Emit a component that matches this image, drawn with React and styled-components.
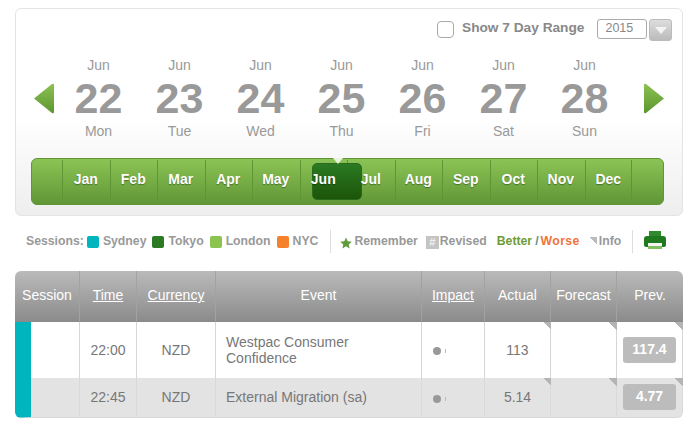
import React from "react";
import styled, { createGlobalStyle } from "styled-components";

const days = [
  ["22", "Mon"],
  ["23", "Tue"],
  ["24", "Wed"],
  ["25", "Thu"],
  ["26", "Fri"],
  ["27", "Sat"],
  ["28", "Sun"],
];
const months = ["Jan", "Feb", "Mar", "Apr", "May", "Jun", "Jul", "Aug", "Sep", "Oct", "Nov", "Dec"];
const rows = [
  { time: "22:00", cur: "NZD", event: "Westpac Consumer Confidence", actual: "113", prev: "117.4" },
  { time: "22:45", cur: "NZD", event: "External Migration (sa)", actual: "5.14", prev: "4.77", alt: true },
];

const Arrow = ({ right }) => (
  <ArrowSvg viewBox="0 0 21 31" $right={right}>
    <defs>
      <linearGradient id={right ? "ar" : "al"} x1="0" y1="0" x2="0" y2="1">
        <stop offset="0" stopColor="#8cc152" />
        <stop offset="1" stopColor="#5c962f" />
      </linearGradient>
    </defs>
    <path
      d={right ? "M1 2 Q1 0 3 1 L21 15.5 L3 30 Q1 31 1 29Z" : "M20 2 Q20 0 18 1 L0 15.5 L18 30 Q20 31 20 29Z"}
      fill={`url(#${right ? "ar" : "al"})`}
    />
  </ArrowSvg>
);

const Printer = () => (
  <svg width="22" height="20" viewBox="0 0 22 20">
    <path d="M5 1h12v5H5z" fill="#2f8a2f" />
    <path d="M3 6h16a3 3 0 0 1 3 3v6a2 2 0 0 1-2 2h-2v-4H4v4H2a2 2 0 0 1-2-2V9a3 3 0 0 1 3-3z" fill="#1f7a1f" />
    <path d="M4 13h14v6H4z" fill="#f4f4f4" />
    <path d="M4 16h14v3H4z" fill="#7fbf5f" />
  </svg>
);

const Star = () => (
  <svg width="12" height="12" viewBox="0 0 24 24">
    <path d="M12 1l3.400 7.400 8.100.9-6 5.500 1.700 8L12 18.700 4.800 22.800l1.700-8-6-5.500 8.100-.9z" fill="#5f9a3c" />
  </svg>
);

export default function App() {
  return (
    <Page>
      <GlobalStyle />
      <Panel>
        <TopRow>
          <Check />
          <RangeLabel>Show 7 Day Range</RangeLabel>
          <YearBox>2015</YearBox>
          <YearButton>
            <YearCaret />
          </YearButton>
        </TopRow>
        <DayRow>
          <Arrow />
          <Days>
            {days.map(([n, d]) => (
              <Day key={n}>
                <DayMonth>Jun</DayMonth>
                <DayNum>{n}</DayNum>
                <DayName>{d}</DayName>
              </Day>
            ))}
          </Days>
          <Arrow right />
        </DayRow>
        <MonthBar>
          {months.map((m) => (
            <Month key={m}>
              {m === "Jun" && (
                <Selected>
                  <Notch />
                </Selected>
              )}
              <MonthText>{m}</MonthText>
            </Month>
          ))}
        </MonthBar>
      </Panel>

      <Legend>
        <LegendText>Sessions:</LegendText>
        <Swatch $c="#00b5bd" $ml={3} />
        <LegendText $ml={4}>Sydney</LegendText>
        <Swatch $c="#2b7a24" $ml={6} />
        <LegendText $ml={4}>Tokyo</LegendText>
        <Swatch $c="#8bc34f" $ml={6} />
        <LegendText $ml={4}>London</LegendText>
        <Swatch $c="#f5822a" $ml={6} />
        <LegendText $ml={4}>NYC</LegendText>
        <LegendDivider $ml={12} />
        <StarWrap>
          <Star />
        </StarWrap>
        <LegendText $ml={2}>Remember</LegendText>
        <HashBox>#</HashBox>
        <LegendText $ml={1}>Revised</LegendText>
        <LegendText $ml={10} $c="#6f9c35">Better</LegendText>
        <LegendText $ml={3} $c="#5f8f8f">/</LegendText>
        <WorseText $ml={2} $c="#f0743a">Worse</WorseText>
        <InfoCorner />
        <LegendText $ml={2}>Info</LegendText>
        <LegendDivider $ml={11} />
        <PrinterWrap>
          <Printer />
        </PrinterWrap>
      </Legend>

      <Table>
        <Head>Session</Head>
        <Head $link>Time</Head>
        <Head $link>Currency</Head>
        <Head>Event</Head>
        <Head $link>Impact</Head>
        <Head>Actual</Head>
        <Head>Forecast</Head>
        <Head $last>Prev.</Head>

        {rows.map((r) => (
          <React.Fragment key={r.time}>
            <Cell $alt={r.alt} $first $bottom={r.alt} />
            <Cell $alt={r.alt}>{r.time}</Cell>
            <Cell $alt={r.alt}>{r.cur}</Cell>
            <EventCell $alt={r.alt}>{r.event}</EventCell>
            <ImpactCell $alt={r.alt}>
              <ImpactDot />
              <ImpactTick />
            </ImpactCell>
            <Cell $alt={r.alt} $corner>{r.actual}</Cell>
            <Cell $alt={r.alt} $corner />
            <Cell $alt={r.alt} $corner $end={r.alt}>
              <Pill>{r.prev}</Pill>
            </Cell>
          </React.Fragment>
        ))}
      </Table>
    </Page>
  );
}

const GlobalStyle = createGlobalStyle`
  html, body {
    margin: 0;
    background: #fff;
  }
  body {
    font-family: "Liberation Sans", Arial, sans-serif;
  }
  * {
    box-sizing: border-box;
  }
`;

const Page = styled.div`
  width: 696px;
  height: 432px;
  padding: 8px 13px 0 15px;
  overflow: hidden;
`;

const Panel = styled.section`
  height: 208px;
  border: 1px solid #e4e4e4;
  border-radius: 6px;
  background: linear-gradient(to bottom, #fff 0, #fff 52%, #eee 100%);
  padding: 10px 0 0 15px;
`;

const TopRow = styled.div`
  display: flex;
  align-items: flex-start;
  height: 30px;
  padding-left: 406px;
`;

const Check = styled.span`
  width: 17px;
  height: 17px;
  margin-top: 2px;
  border: 1px solid #aaa;
  border-radius: 4px;
  background: #fff;
`;

const RangeLabel = styled.span`
  margin-left: 8px;
  font-size: 13.7px;
  font-weight: bold;
  line-height: 18px;
  color: #888;
`;

const YearBox = styled.span`
  width: 50px;
  height: 20px;
  margin-left: 13px;
  border: 1px solid #aaa;
  border-radius: 3px;
  background: #fff;
  font-size: 12.5px;
  line-height: 17px;
  padding-left: 7px;
  color: #888;
`;

const YearButton = styled.span`
  display: flex;
  align-items: center;
  justify-content: center;
  width: 23px;
  height: 22px;
  margin-left: 2px;
  border: 1px solid #bbb;
  border-radius: 3px;
  background: linear-gradient(to bottom, #ddd, #bbb);
`;

const YearCaret = styled.span`
  width: 0;
  height: 0;
  border-left: 6px solid transparent;
  border-right: 6px solid transparent;
  border-top: 7px solid #f4f4f4;
`;

const DayRow = styled.div`
  display: flex;
  align-items: center;
  height: 98px;
  padding-left: 3px;
`;

const ArrowSvg = styled.svg`
  flex: none;
  width: 21px;
  height: 31px;
  margin-left: ${(p) => (p.$right ? "18px" : "0")};
`;

const Days = styled.div`
  display: flex;
  margin-left: 3px;
`;

const Day = styled.div`
  width: 81px;
  text-align: center;
  color: #999;
`;

const DayMonth = styled.div`
  font-size: 14px;
  line-height: 16px;
`;

const DayNum = styled.div`
  font-size: 43px;
  font-weight: bold;
  line-height: 50px;
`;

const DayName = styled.div`
  font-size: 14px;
  line-height: 16px;
`;

const MonthBar = styled.div`
  display: flex;
  width: 633px;
  height: 47px;
  margin-top: 11px;
  padding: 0 30px;
  border: 1px solid #5f9535;
  border-radius: 6px;
  background-image: linear-gradient(180deg, #8cc556 0%, #5f9535 100%);
  background-origin: border-box;
  background-clip: border-box;
  background-repeat: no-repeat;
`;

const Month = styled.div`
  position: relative;
  display: flex;
  align-items: center;
  justify-content: center;
  width: 47.5px;
  padding-bottom: 5px;

  &::before {
    content: "";
    position: absolute;
    left: 0;
    top: 1px;
    bottom: 1px;
    width: 1px;
    background: #5f9535;
  }

  &:last-child::after {
    content: "";
    position: absolute;
    right: 0;
    top: 1px;
    bottom: 1px;
    width: 1px;
    background: #5f9535;
  }
`;

const MonthText = styled.span`
  position: relative;
  z-index: 2;
  font-size: 14px;
  font-weight: bold;
  color: #fff;
  text-shadow: 0 1px 1px rgba(0, 0, 0, 0.35);
`;

const Selected = styled.div`
  position: absolute;
  left: 12px;
  top: 4px;
  width: 50px;
  height: 37px;
  border: 1px solid #2a6a1c;
  border-radius: 5px;
  background: linear-gradient(to bottom, #2b7a24, #1c5508);
  z-index: 1;
`;

const Notch = styled.span`
  position: absolute;
  left: 20px;
  top: -6px;
  width: 0;
  height: 0;
  border-left: 5px solid transparent;
  border-right: 5px solid transparent;
  border-top: 6px solid #eaf3df;
`;

const Legend = styled.div`
  display: flex;
  align-items: center;
  height: 26px;
  margin-top: 12px;
  padding-left: 11px;
`;

const LegendText = styled.span`
  margin-left: ${(p) => p.$ml || 0}px;
  font-size: 12.25px;
  font-weight: bold;
  color: ${(p) => p.$c || "#999"};
`;

const WorseText = styled(LegendText)`
  letter-spacing: 0.4px;
`;

const Swatch = styled.span`
  width: 12px;
  height: 12px;
  margin-left: ${(p) => p.$ml}px;
  margin-top: 1px;
  border-radius: 2px;
  background: ${(p) => p.$c};
`;

const LegendDivider = styled.span`
  width: 1px;
  height: 23px;
  margin-left: ${(p) => p.$ml}px;
  background: #ddd;
`;

const StarWrap = styled.span`
  display: flex;
  margin-left: 9px;
  margin-top: 3px;
`;

const HashBox = styled.span`
  width: 13px;
  height: 13px;
  margin-left: 8px;
  margin-top: 2px;
  background: #c4c4c4;
  color: #eee;
  font-size: 11px;
  font-weight: bold;
  line-height: 13px;
  text-align: center;
`;

const InfoCorner = styled.span`
  width: 8px;
  height: 8px;
  margin-left: 9px;
  background: linear-gradient(to bottom left, #bbb 50%, transparent 50%);
`;

const PrinterWrap = styled.span`
  display: flex;
  margin-left: 11px;
  margin-top: -3px;
`;

const Table = styled.div`
  display: grid;
  grid-template-columns: 65px 57px 79px 206px 63px 66px 66px 66px;
  grid-template-rows: 51px 56px 40px;
  margin-top: 17px;
  width: 668px;
`;

const Head = styled.div`
  display: flex;
  align-items: center;
  justify-content: center;
  padding-bottom: 2px;
  border-right: ${(p) => (p.$last ? "none" : "1px solid #a2a2a2")};
  border-bottom: 1px solid #8a8a8a;
  background: linear-gradient(to bottom, #bababa, #8c8c8c);
  font-size: 14px;
  color: #fff;
  text-decoration: ${(p) => (p.$link ? "underline" : "none")};

  &:first-child {
    border-top-left-radius: 6px;
  }
  &:nth-child(8) {
    border-top-right-radius: 6px;
  }
`;

const Cell = styled.div`
  position: relative;
  display: flex;
  align-items: center;
  justify-content: center;
  padding-bottom: 1px;
  background: ${(p) => (p.$alt ? "#e3e3e3" : "#fff")};
  border-right: 1px solid ${(p) => (p.$alt ? "#d9d9d9" : "#d6d6d6")};
  border-bottom: ${(p) => (p.$alt ? "1px solid #d9d9d9" : "none")};
  font-size: 14px;
  color: #777;
  ${(p) => p.$first && `border-left: 16px solid #00b5bd;`}
  ${(p) => p.$bottom && `border-bottom-left-radius: 6px;`}
  ${(p) => p.$end && `border-bottom-right-radius: 6px;`}

  ${(p) =>
    p.$corner &&
    `&::after {
      content: "";
      position: absolute;
      top: 0;
      right: -1px;
      width: 8px;
      height: 8px;
      background: linear-gradient(to bottom left, #b4b4b4 50%, transparent 50%);
    }`}
`;

const EventCell = styled(Cell)`
  justify-content: flex-start;
  padding: 0 40px 1px 10px;
  line-height: 16px;
`;

const ImpactCell = styled(Cell)`
  justify-content: flex-start;
  padding: 2px 0 0 11px;
`;

const ImpactDot = styled.span`
  width: 8px;
  height: 8px;
  border-radius: 50%;
  background: #999;
`;

const ImpactTick = styled.span`
  width: 1px;
  height: 4px;
  margin-left: 4px;
  background: #bbb;
`;

const Pill = styled.span`
  width: 53px;
  height: 26px;
  border-radius: 3px;
  background: #bcbcbc;
  color: #fff;
  font-size: 14px;
  font-weight: bold;
  line-height: 25px;
  text-align: center;
`;
